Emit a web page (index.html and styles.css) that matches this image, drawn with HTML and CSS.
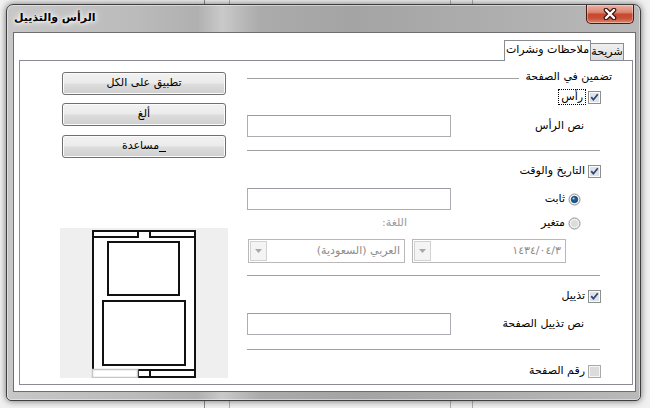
FILE: index.html
```html
<!DOCTYPE html>
<html lang="ar">
<head>
<meta charset="utf-8">
<title>الرأس والتذييل</title>
<link rel="stylesheet" href="styles.css">
</head>
<body>
<div class="desktop">
  <div class="window">
    <div class="titlebar">
      <span class="title">الرأس والتذييل</span>
      <div class="close">
        <svg width="14" height="12" viewBox="0 0 14 12"><path d="M3 2 L11 10 M11 2 L3 10" stroke="#3b1510" stroke-width="4.6" stroke-linecap="round" fill="none"/><path d="M3 2 L11 10 M11 2 L3 10" stroke="#ffffff" stroke-width="2.4" stroke-linecap="round" fill="none"/></svg>
      </div>
    </div>
    <div class="client">
      <div class="tabs" dir="rtl">
        <div class="tab">شريحة</div>
        <div class="tab active">ملاحظات ونشرات</div>
      </div>
      <div class="panel" dir="rtl">
        <div class="form">
          <div class="group-head"><span>تضمين في الصفحة</span><i class="gline"></i></div>

          <div class="row check r-head">
            <svg class="cb" width="13" height="13" viewBox="0 0 13 13"><rect x=".5" y=".5" width="12" height="12" fill="#fbfbfb" stroke="#8e8f8f"/><rect x="2" y="2" width="9" height="9" fill="#dfe3e8"/><path d="M3.2 6.2 L5.4 8.7 L9.8 3.3" fill="none" stroke="#2f4878" stroke-width="1.8"/></svg>
            <span class="focus">رأس</span>
          </div>

          <div class="row field r-headtext"><span>نص الرأس</span><div class="input"></div></div>

          <div class="sep s1"></div>

          <div class="row check r-date">
            <svg class="cb" width="13" height="13" viewBox="0 0 13 13"><rect x=".5" y=".5" width="12" height="12" fill="#fbfbfb" stroke="#8e8f8f"/><rect x="2" y="2" width="9" height="9" fill="#dfe3e8"/><path d="M3.2 6.2 L5.4 8.7 L9.8 3.3" fill="none" stroke="#2f4878" stroke-width="1.8"/></svg>
            <span>التاريخ والوقت</span>
          </div>

          <div class="row radio-field r-fixed">
            <span class="radio-wrap">
              <svg class="rb" width="13" height="13" viewBox="0 0 13 13"><circle cx="6.5" cy="6.5" r="5.5" fill="#f2f2f2" stroke="#8e8f8f"/><circle cx="6.5" cy="6.5" r="3.2" fill="#1c5a98" stroke="#0e365f" stroke-width=".8"/><circle cx="5.6" cy="5.5" r="1.1" fill="#9ad6f6"/></svg>
              <span>ثابت</span>
            </span>
            <div class="input"></div>
          </div>

          <div class="row r-var">
            <span class="radio-wrap">
              <svg class="rb" width="13" height="13" viewBox="0 0 13 13"><circle cx="6.5" cy="6.5" r="5.5" fill="#f2f2f2" stroke="#8e8f8f"/><circle cx="6.5" cy="6.5" r="3.5" fill="#dcdcdc"/></svg>
              <span>متغير</span>
            </span>
            <span class="lang">اللغة:</span>
          </div>

          <div class="row combos">
            <div class="combo c1"><span class="ctext">١٤٣٤/٠٤/٣</span><b class="dd"><svg width="7" height="4" viewBox="0 0 7 4"><path d="M0 0 H7 L3.5 4 Z" fill="#a8a8a8"/></svg></b></div>
            <div class="combo c2"><span class="ctext">العربي (السعودية)</span><b class="dd"><svg width="7" height="4" viewBox="0 0 7 4"><path d="M0 0 H7 L3.5 4 Z" fill="#a8a8a8"/></svg></b></div>
          </div>

          <div class="sep s2"></div>

          <div class="row check r-footer">
            <svg class="cb" width="13" height="13" viewBox="0 0 13 13"><rect x=".5" y=".5" width="12" height="12" fill="#fbfbfb" stroke="#8e8f8f"/><rect x="2" y="2" width="9" height="9" fill="#dfe3e8"/><path d="M3.2 6.2 L5.4 8.7 L9.8 3.3" fill="none" stroke="#2f4878" stroke-width="1.8"/></svg>
            <span>تذييل</span>
          </div>

          <div class="row field r-foottext"><span>نص تذييل الصفحة</span><div class="input"></div></div>

          <div class="sep s3"></div>

          <div class="row check r-num">
            <svg class="cb" width="13" height="13" viewBox="0 0 13 13"><rect x=".5" y=".5" width="12" height="12" fill="#f6f6f6" stroke="#a9a9a9"/><rect x="2" y="2" width="9" height="9" fill="#dcdcdc"/></svg>
            <span>رقم الصفحة</span>
          </div>
        </div>

        <div class="side">
          <div class="btn b1">تطبيق على الكل</div>
          <div class="btn b2">ألغ</div>
          <div class="btn b3"><span class="ul"></span>مساعدة</div>
          <div class="preview">
            <svg width="168" height="150" viewBox="0 0 168 150">
              <rect x="33" y="3" width="102" height="146" fill="#ffffff" stroke="#111" stroke-width="2"/>
              <path d="M33 9 H78 V3 M90 3 V9 H135" fill="none" stroke="#111" stroke-width="2"/>
              <rect x="48" y="14" width="71" height="53" fill="#fff" stroke="#111" stroke-width="2"/>
              <rect x="43" y="73" width="82" height="64" fill="#fff" stroke="#111" stroke-width="2"/>
              <path d="M78 149 V142 H135 M90 142 V149" fill="none" stroke="#111" stroke-width="2"/>
              <rect x="32.5" y="141.5" width="45" height="8" fill="#fff" stroke="#c6c6c6" stroke-width="1.5"/>
            </svg>
          </div>
        </div>
      </div>
    </div>
  </div>
</div>
</body>
</html>
```

FILE: styles.css
```css
* { box-sizing: border-box; }
html, body { margin: 0; padding: 0; }
body {
  width: 650px;
  height: 408px;
  overflow: hidden;
  font-family: "DejaVu Sans", Tahoma, sans-serif;
  font-size: 11px;
  color: #000;
}
.desktop {
  width: 650px;
  height: 408px;
  padding: 4px 0 0 6px;
  background:
    linear-gradient(to right, transparent 204px, #8a8a8a 204px, #8a8a8a 205px, transparent 205px,
      transparent 229px, #b0b0b0 229px, #b0b0b0 230px, transparent 230px,
      transparent 450px, #b0b0b0 450px, #b0b0b0 451px, transparent 451px,
      transparent 472px, #b0b0b0 472px, #b0b0b0 473px, transparent 473px),
    #f1f1f1;
}
.window {
  width: 635px;
  height: 397px;
  border: 1px solid #3f3f3f;
  border-radius: 7px 7px 5px 5px;
  padding: 0 4px 8px 6px;
  background: linear-gradient(90deg, #c7c7c7 0%, #bbbbbb 20%, #b0b0b0 30%, #c9c9c9 34%, #ababab 40%, #a4a4a4 55%, #adadad 75%, #b9b9b9 100%);
  box-shadow: 0 0 7px rgba(0,0,0,.55), inset 0 0 0 1px rgba(255,255,255,.45);
}
.titlebar {
  height: 27px;
  display: flex;
  justify-content: space-between;
  align-items: flex-start;
}
.title {
  margin-top: 6px;
  padding-left: 1px;
  font-size: 11px;
  font-weight: bold;
  line-height: 14px;
  text-shadow: 0 0 5px #fff, 0 0 8px #fff, 0 0 3px #fff;
}
.close {
  width: 48px;
  height: 19px;
  margin-right: 2px;
  border: 1px solid #4a1a14;
  border-top: none;
  border-radius: 0 0 5px 5px;
  background: linear-gradient(#eab1a3 0%, #dc8772 40%, #c8472f 52%, #c8523a 75%, #dd8a6e 100%);
  box-shadow: inset 0 0 0 1px rgba(255,255,255,.35);
  display: flex;
  align-items: center;
  justify-content: center;
}
.client {
  width: 623px;
  height: 360px;
  border: 1px solid #6e6e6e;
  background: #fff;
  padding: 7px 2px 0 5px;
}
.tabs {
  height: 21px;
  display: flex;
  padding-right: 9px;
  position: relative;
  z-index: 2;
}
.tab {
  margin-top: 3px;
  height: 17px;
  width: 34px;
  border: 1px solid #898c95;
  border-bottom: none;
  background: linear-gradient(#f0f0f0, #dcdcdc);
  text-align: center;
  line-height: 15px;
  white-space: nowrap;
  overflow: hidden;
}
.tab.active {
  margin-top: 0;
  height: 21px;
  width: 87px;
  margin-right: -1px;
  background: #fff;
  line-height: 18px;
}
.panel {
  margin-top: -1px;
  width: 614px;
  height: 325px;
  border: 1px solid #898c95;
  background: #fff;
  display: flex;
  align-items: flex-start;
  padding-right: 20px;
}
.form { width: 365px; }
.side { width: 164px; margin-right: 21px; }

.row {
  display: flex;
  align-items: center;
  height: 16px;
  line-height: 16px;
  white-space: nowrap;
}
.group-head {
  margin-top: 8px;
  height: 16px;
  line-height: 16px;
  display: flex;
  align-items: center;
}
.gline {
  flex: 1;
  height: 1px;
  margin-right: 6px;
  margin-top: 2px;
  background: #a0a0a0;
}
.check { padding-right: 11px; gap: 3px; }
.cb, .rb { flex: none; display: block; }
.focus {
  outline: 1px dotted #000;
  outline-offset: 0;
  padding: 0 2px;
  line-height: 14px;
}
.field {
  height: 22px;
  justify-content: space-between;
  padding-right: 28px;
}
.input {
  width: 204px;
  height: 22px;
  border: 1px solid #abadb3;
  border-top-color: #9a9ca3;
  background: #fff;
}
.radio-field {
  height: 22px;
  justify-content: space-between;
  padding-right: 31px;
}
.radio-wrap { display: flex; align-items: center; gap: 3px; }
.r-var .radio-wrap { width: 205px; padding-right: 31px; }
.lang { color: #9a9a9a; }
.sep { height: 1px; background: #a0a0a0; margin-left: 0; margin-right: 12px; }

.r-head { margin-top: 4px; }
.r-headtext { margin-top: 10px; }
.s1 { margin-top: 13px; }
.r-date { margin-top: 12px; }
.r-fixed { margin-top: 9px; }
.r-var { margin-top: 5px; }
.combos { margin-top: 8px; height: 24px; padding-right: 46px; gap: 7px; }
.s2 { margin-top: 12px; }
.r-footer { margin-top: 12px; }
.r-foottext { margin-top: 9px; }
.s3 { margin-top: 14px; }
.r-num { margin-top: 13px; }

.combo {
  height: 24px;
  border: 1px solid #b8b8b8;
  background: #fff;
  display: flex;
  align-items: center;
  justify-content: space-between;
  padding: 1px;
  color: #8d8d8d;
}
.c1 { width: 154px; }
.c2 { width: 157px; }
.ctext { padding-right: 3px; }
.dd {
  width: 17px;
  height: 20px;
  border: 1px solid #d2d2d2;
  background: #f4f4f4;
  display: flex;
  align-items: center;
  justify-content: center;
}
.dd svg { display: block; }

.btn {
  height: 23px;
  border: 1px solid #707070;
  border-radius: 3px;
  background: linear-gradient(#f2f2f2 0%, #ebebeb 48%, #dddddd 52%, #cfcfcf 100%);
  box-shadow: inset 0 0 0 1px #fbfbfb;
  text-align: center;
  line-height: 20px;
  white-space: nowrap;
}
.b1 { margin-top: 11px; }
.b2 { margin-top: 8px; }
.b3 { margin-top: 9px; }
.ul {
  display: inline-block;
  width: 7px;
  height: 1px;
  background: #000;
  vertical-align: -3px;
}
.preview {
  margin: 70px -2px 0 -2px;
  width: 168px;
  height: 150px;
  background: #efefef;
}
.preview svg { display: block; }
```
